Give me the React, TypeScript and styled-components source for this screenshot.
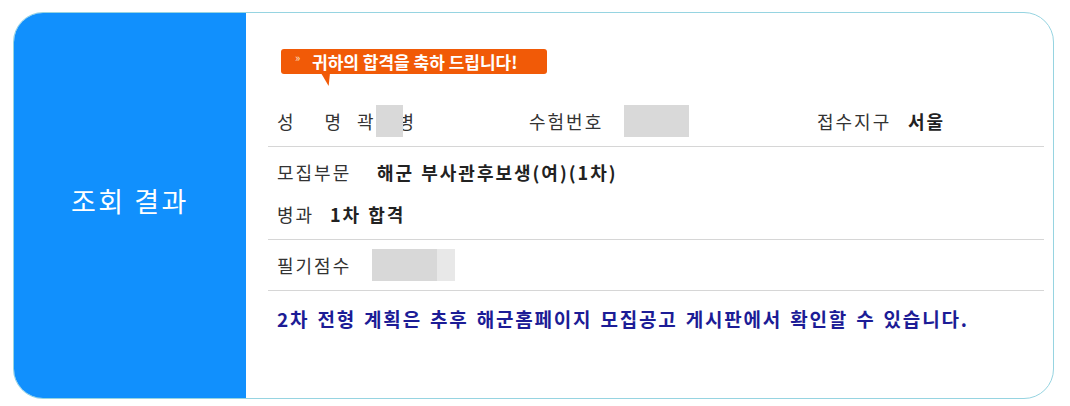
import React from "react";
import styled, { createGlobalStyle } from "styled-components";

const Global = createGlobalStyle`
  html, body { margin: 0; padding: 0; background: #ffffff; }
  body { font-family: "Noto Sans CJK KR", "Noto Sans", sans-serif; }
`;

const Page = styled.div`
  padding: 12px 16px 8px 13px;
  width: 1070px;
  box-sizing: border-box;
`;

const Card = styled.div`
  display: flex;
  height: 387px;
  border: 1.5px solid #96d4e1;
  border-radius: 30px;
  overflow: hidden;
  box-sizing: border-box;
  background: #fff;
`;

const Side = styled.div`
  width: 232px;
  flex: none;
  background: #1190fd;
  display: flex;
  align-items: center;
  justify-content: center;
  color: #fff;
  font-size: 27px;
  letter-spacing: 2.5px;
  padding-bottom: 10px;
  box-sizing: border-box;
`;

const Main = styled.div`
  flex: 1;
  padding: 36px 9px 0 22px;
  display: flex;
  flex-direction: column;
`;

const BadgeWrap = styled.div`
  position: relative;
  align-self: flex-start;
  margin-left: 13px;
  margin-bottom: 22px;
`;

const Badge = styled.div`
  background: #f15a07;
  color: #fff;
  height: 25px;
  border-radius: 3px;
  padding: 0 0 0 31px;
  display: flex;
  align-items: center;
  font-size: 17px;
  font-weight: 700;
  letter-spacing: 0px;
  width: 266px;
  box-sizing: border-box;
`;

const Quote = styled.span`
  position: absolute;
  left: 14px;
  top: 0px;
  font-size: 11px;
  font-weight: 400;
  color: #ffe7d0;
`;

const Tail = styled.span`
  position: absolute;
  left: 40px;
  top: 24px;
  width: 9px;
  height: 13px;
  background: #f15a07;
  clip-path: polygon(0 0, 100% 0, 85% 100%);
`;

const Section = styled.div<{ $pt?: number; $pb?: number }>`
  display: flex;
  flex-direction: column;
  border-bottom: 1px solid #d6d6d6;
  padding: ${(p) => p.$pt ?? 0}px 0 ${(p) => p.$pb ?? 0}px 9px;
`;

const Row = styled.div<{ $h: number }>`
  display: flex;
  align-items: center;
  height: ${(p) => p.$h}px;
  font-size: 18px;
  letter-spacing: 2px;
  word-spacing: 1px;
  color: #333;
`;

const Label = styled.span<{ $w?: number }>`
  display: inline-block;
  width: ${(p) => (p.$w ? `${p.$w}px` : "auto")};
  color: #333;
  flex: none;
`;

const NameLabel = styled.span`
  display: inline-flex;
  justify-content: space-between;
  width: 66px;
  flex: none;
  margin-right: 14px;
`;

const Plain = styled.span<{ $ml?: number }>`
  color: #333;
  flex: none;
  margin-left: ${(p) => p.$ml ?? 0}px;
`;

const Value = styled.span`
  font-weight: 700;
  color: #222;
  flex: none;
`;

const Field = styled.div<{ $w: number }>`
  display: flex;
  align-items: center;
  width: ${(p) => p.$w}px;
  flex: none;
`;

const Mask = styled.span<{ $w: number; $ml?: number; $light?: number }>`
  display: inline-block;
  position: relative;
  z-index: 1;
  width: ${(p) => p.$w}px;
  height: 32px;
  margin-left: ${(p) => p.$ml ?? 0}px;
  background: ${(p) =>
    p.$light
      ? `linear-gradient(to right, #d8d8d8 0 ${p.$light}px, #e8e8e8 ${p.$light}px)`
      : "#d9d9d9"};
  flex: none;
`;

const Notice = styled.div`
  height: 54px;
  display: flex;
  align-items: center;
  padding-left: 9px;
  font-size: 19px;
  font-weight: 700;
  color: #1c1c96;
  letter-spacing: 1.8px;
  word-spacing: 2px;
`;

export default function App() {
  return (
    <>
      <Global />
      <Page>
        <Card>
          <Side>조회 결과</Side>
          <Main>
            <BadgeWrap>
              <Badge>귀하의 합격을 축하 드립니다!</Badge>
              <Quote>»</Quote>
              <Tail />
            </BadgeWrap>
            <Section>
              <Row $h={50}>
                <Field $w={252}>
                  <NameLabel>
                    <span>성</span>
                    <span>명</span>
                  </NameLabel>
                  <Plain>곽</Plain>
                  <Mask $w={27} />
                  <Plain $ml={-5}>병</Plain>
                </Field>
                <Field $w={288}>
                  <Label $w={95}>수험번호</Label>
                  <Mask $w={65} />
                </Field>
                <Field $w={200}>
                  <Label $w={91}>접수지구</Label>
                  <Value>서울</Value>
                </Field>
              </Row>
            </Section>
            <Section $pb={8}>
              <Row $h={50}>
                <Label $w={100}>모집부문</Label>
                <Value>해군 부사관후보생(여)(1차)</Value>
              </Row>
              <Row $h={34}>
                <Label $w={53}>병과</Label>
                <Value>1차 합격</Value>
              </Row>
            </Section>
            <Section>
              <Row $h={50}>
                <Label $w={95}>필기점수</Label>
                <Mask $w={83} $light={65} />
              </Row>
            </Section>
            <Notice>2차 전형 계획은 추후 해군홈페이지 모집공고 게시판에서 확인할 수 있습니다.</Notice>
          </Main>
        </Card>
      </Page>
    </>
  );
}
